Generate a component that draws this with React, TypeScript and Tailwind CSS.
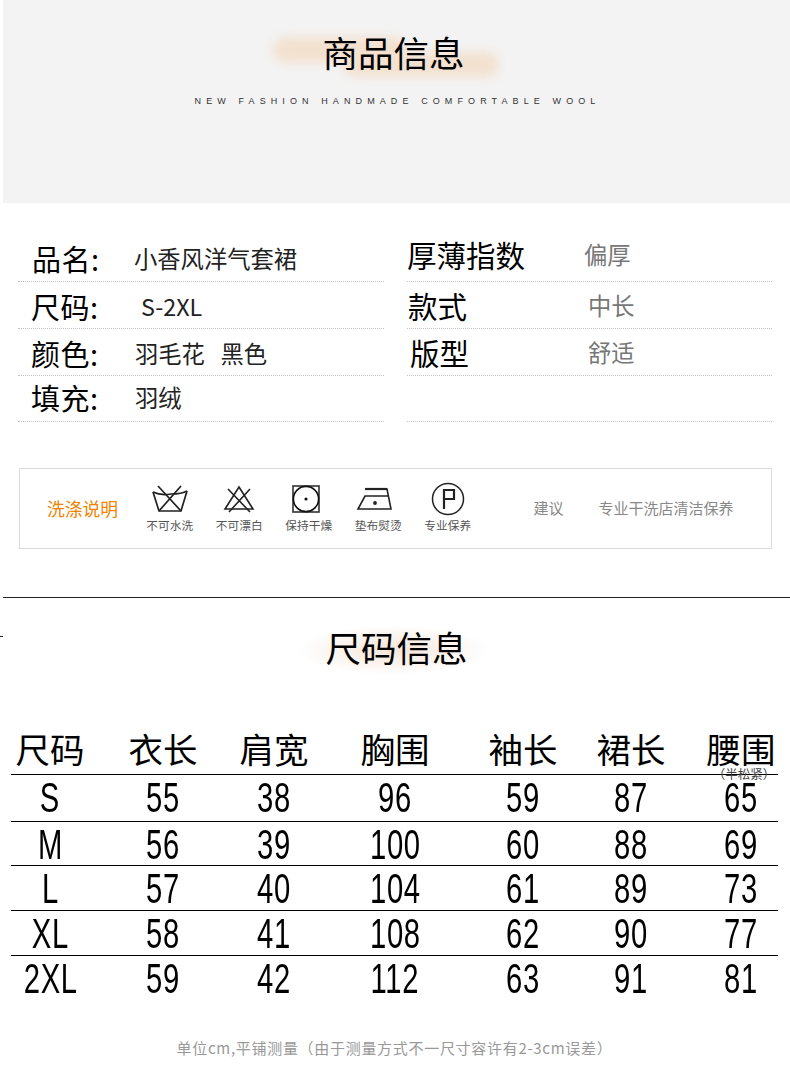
const cjk = "font-['Noto_Sans_CJK_SC','Noto_Sans',sans-serif]";

const LEFT_SPECS = [
  { label: "品名:", value: "小香风洋气套裙", row: "h-[47px] pt-[5px]", labelClass: "pl-[14px]", valueClass: "ml-[14px]" },
  { label: "尺码:", value: "S-2XL", row: "h-[47px] pt-[6px]", labelClass: "pl-[13px]", valueClass: "ml-[21px]" },
  { label: "颜色:", value: "羽毛花   黑色", row: "h-[47px] pt-[6px]", labelClass: "pl-[13px]", valueClass: "ml-[15px]" },
  { label: "填充:", value: "羽绒", row: "h-[46px] pt-[3px]", labelClass: "pl-[13px]", valueClass: "ml-[15px]" },
];

const RIGHT_SPECS = [
  { label: "厚薄指数", value: "偏厚", row: "h-[47px] pt-[1px]", labelClass: "w-[177px]" },
  { label: "款式", value: "中长", row: "h-[47px] pt-[5px]", labelClass: "w-[181px] pl-[1px]" },
  { label: "版型", value: "舒适", row: "h-[47px] pt-[5px]", labelClass: "w-[181px] pl-[3px]" },
  { label: "", value: "", row: "h-[46px]", labelClass: "" },
];

const SIZE_ROWS = [
  { cells: ["S", "55", "38", "96", "59", "87", "65"], row: "h-[47px] border-b" },
  { cells: ["M", "56", "39", "100", "60", "88", "69"], row: "h-[44px] border-b" },
  { cells: ["L", "57", "40", "104", "61", "89", "73"], row: "h-[45px] border-b" },
  { cells: ["XL", "58", "41", "108", "62", "90", "77"], row: "h-[45px] border-b" },
  { cells: ["2XL", "59", "42", "112", "63", "91", "81"], row: "h-[46px]" },
];

const HEADERS = ["尺码", "衣长", "肩宽", "胸围", "袖长", "裙长", "腰围"];

// uneven on purpose, the centres of the columns in the picture are not regular
const COLS = "grid grid-cols-[78px_148px_74px_168px_88px_128px_92px]";

function NoWash() {
  return (
    <svg viewBox="0 0 38 30" className="w-[38px] h-[30px]" fill="none" stroke="#222" strokeWidth="1.7">
      <path d="M2 8 C8 11 14 11 20 10 C26 10 31 10 36 7" />
      <path d="M2 8 L8 27 H30 L36 7" />
      <path d="M7 2 L30 27 M30 2 L8 27" />
    </svg>
  );
}

function NoBleach() {
  return (
    <svg viewBox="0 0 34 30" className="w-[34px] h-[30px]" fill="none" stroke="#222" strokeWidth="1.6">
      <path d="M17 3 L31 25 H3 Z" />
      <path d="M6 5 L28 28 M28 5 L7 28" />
    </svg>
  );
}

function TumbleDry() {
  return (
    <svg viewBox="0 0 30 30" className="w-[30px] h-[30px]" fill="none" stroke="#333" strokeWidth="1.6">
      <rect x="2" y="2" width="26" height="26" />
      <circle cx="15" cy="15" r="12.6" stroke="#111" />
      <circle cx="15" cy="15" r="1.6" fill="#111" stroke="none" />
    </svg>
  );
}

function Iron() {
  return (
    <svg viewBox="0 0 40 30" className="w-[40px] h-[30px]" fill="none" stroke="#222" strokeWidth="1.6">
      <path d="M9 5 H31 L35 25 H2 L9 12 H32" />
      <path d="M9 5 H31" strokeWidth="2.2" />
      <circle cx="19" cy="19" r="1.9" fill="#222" stroke="none" />
    </svg>
  );
}

function DryClean() {
  return (
    <svg viewBox="0 0 34 34" className="w-[34px] h-[34px]" fill="none" stroke="#222" strokeWidth="1.5">
      <circle cx="17" cy="17" r="15.5" />
      <path d="M13 27 V8 H23 V17 H13" strokeWidth="2.2" />
    </svg>
  );
}

const CARE = [
  { icon: <NoWash />, label: "不可水洗", iconClass: "" },
  { icon: <NoBleach />, label: "不可漂白", iconClass: "" },
  { icon: <TumbleDry />, label: "保持干燥", iconClass: "mr-[5px]" },
  { icon: <Iron />, label: "垫布熨烫", iconClass: "mr-[5px]" },
  { icon: <DryClean />, label: "专业保养", iconClass: "" },
];

export default function App() {
  return (
    <div className={`w-[790px] h-[1077px] bg-white overflow-hidden text-black ${cjk}`}>
      {/* 商品信息 */}
      <div className="relative ml-[3px] h-[203px] bg-[#f3f3f3] flex flex-col items-center pt-[29px] pr-[6px]">
        <div className="absolute left-[270px] top-[37px] w-[132px] h-[26px] rounded-full bg-[#f3e1d0] blur-[5px]" />
        <div className="absolute left-[340px] top-[52px] w-[156px] h-[25px] rounded-full bg-[#f3e1d0] blur-[5px]" />
        <h1 className="relative text-[35.5px] leading-[46px] font-normal">商品信息</h1>
        <p className="mt-[20px] ml-[8px] text-[9px] leading-[12px] tracking-[5.1px] text-[#333] font-['Liberation_Sans',sans-serif]">
          NEW FASHION HANDMADE COMFORTABLE WOOL
        </p>
      </div>

      {/* specs */}
      <div className="flex mt-[32px] ml-[18px] gap-[23px]">
        <div className="w-[366px]">
          {LEFT_SPECS.map((s) => (
            <div key={s.label} className={`flex items-start border-b border-dotted border-[#c4c4c4] ${s.row}`}>
              <span className={`w-[102px] text-[29px] leading-[36px] tracking-[0.5px] ${s.labelClass}`}>{s.label}</span>
              <span className={`text-[23.3px] leading-[36px] text-[#222] whitespace-pre ${s.valueClass}`}>{s.value}</span>
            </div>
          ))}
        </div>
        <div className="w-[365px]">
          {RIGHT_SPECS.map((s, i) => (
            <div key={i} className={`flex items-start border-b border-dotted border-[#c4c4c4] ${s.row}`}>
              <span className={`text-[29.5px] leading-[36px] ${s.labelClass}`}>{s.label}</span>
              <span className="text-[23.3px] leading-[36px] text-[#777]">{s.value}</span>
            </div>
          ))}
        </div>
      </div>

      {/* care */}
      <div className="mt-[46px] ml-[19px] w-[753px] h-[81px] border border-[#d9d9d9] flex items-center">
        <span className="ml-[27px] w-[88px] text-[17.8px] text-[#f08300]">洗涤说明</span>
        <div className="flex -mt-[3px]">
          {CARE.map((c) => (
            <div key={c.label} className="flex flex-col items-center w-[69.5px]">
              <div className={`h-[34px] flex items-center justify-center ${c.iconClass}`}>{c.icon}</div>
              <span className="mt-[1px] text-[11.7px] leading-[16px] text-[#555]">{c.label}</span>
            </div>
          ))}
        </div>
        <span className="ml-[51px] text-[15px] text-[#888]">建议</span>
        <span className="ml-[35px] text-[15px] text-[#888]">专业干洗店清洁保养</span>
      </div>

      <div className="mt-[48px] ml-[3px] h-px bg-[#222]" />
      <div className="mt-[38px] w-[3px] h-px bg-[#222]" />

      {/* 尺码信息 */}
      <div className="relative mt-[-19px] h-[60px] flex justify-center pl-[3px]">
        <div className="absolute left-[298px] top-[7px] w-[190px] h-[50px] rounded-full bg-[radial-gradient(closest-side,#f4e4d7,#fff)]" />
        <h2 className="relative text-[35.5px] leading-[46px] font-normal pt-[6px]">尺码信息</h2>
      </div>

      {/* size table */}
      <div className="mt-[50px] ml-[11px] w-[767px]">
        <div className={`${COLS} h-[47px] border-b border-black text-[34.5px] leading-[40px] text-center`}>
          {HEADERS.map((h) => (
            <div key={h} className="relative">
              {h}
              {h === "腰围" && (
                <span className="absolute -left-[7px] -right-[13px] top-[38px] text-[12.5px] leading-[16px] text-[#444]">（半松紧）</span>
              )}
            </div>
          ))}
        </div>
        {SIZE_ROWS.map((r) => (
          <div key={r.cells[0]} className={`${COLS} border-black items-center text-center pb-[2px] ${r.row}`}>
            {r.cells.map((c, i) => (
              <div key={i} className="font-['Liberation_Sans',sans-serif] text-[43px] leading-[44px]">
                <span className="inline-block scale-x-[0.68] tracking-[1px]">{c}</span>
              </div>
            ))}
          </div>
        ))}
      </div>

      <p className="mt-[36px] pr-[1px] text-center text-[15px] tracking-[0.7px] leading-[20px] text-[#999]">
        单位cm,平铺测量（由于测量方式不一尺寸容许有2-3cm误差）
      </p>
    </div>
  );
}
